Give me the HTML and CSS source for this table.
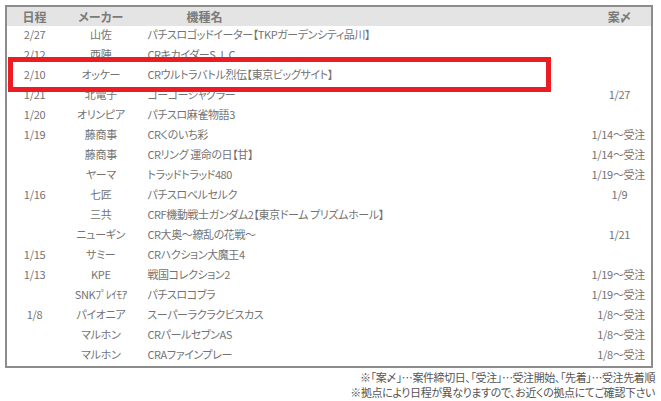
FILE: index.html
```html
<!DOCTYPE html>
<html lang="ja">
<head>
  <meta charset="UTF-8" />
  <title>発売日程</title>
  <link rel="stylesheet" href="styles.css">
</head>
<body>
  <div class="schedule">
    <table class="schedule-table">
      <colgroup>
        <col class="col-date" />
        <col class="col-maker" />
        <col class="col-model" />
        <col class="col-deadline" />
      </colgroup>
      <thead>
        <tr>
          <th>日程</th>
          <th>メーカー</th>
          <th class="th-model">機種名</th>
          <th>案〆</th>
        </tr>
      </thead>
      <tbody>
        <tr><td>2/27</td><td>山佐</td><td>パチスロゴッドイーター【TKPガーデンシティ品川】</td><td></td></tr>
        <tr><td>2/12</td><td>西陣</td><td>CRキカイダーS．I．C</td><td></td></tr>
        <tr><td>2/10</td><td>オッケー</td><td>CRウルトラバトル烈伝【東京ビッグサイト】</td><td></td></tr>
        <tr><td>1/21</td><td>北電子</td><td>ゴーゴージャグラー</td><td>1/27</td></tr>
        <tr><td>1/20</td><td>オリンピア</td><td>パチスロ麻雀物語3</td><td></td></tr>
        <tr><td>1/19</td><td>藤商事</td><td>CRくのいち彩</td><td class="right">1/14～受注</td></tr>
        <tr><td></td><td>藤商事</td><td>CRリング 運命の日【甘】</td><td class="right">1/14～受注</td></tr>
        <tr><td></td><td>ヤーマ</td><td>トラッドトラッド480</td><td class="right">1/19～受注</td></tr>
        <tr><td>1/16</td><td>七匠</td><td>パチスロベルセルク</td><td>1/9</td></tr>
        <tr><td></td><td>三共</td><td>CRF機動戦士ガンダム2【東京ドーム プリズムホール】</td><td></td></tr>
        <tr><td></td><td>ニューギン</td><td>CR大奥～繚乱の花戦～</td><td>1/21</td></tr>
        <tr><td>1/15</td><td>サミー</td><td>CRハクション大魔王4</td><td></td></tr>
        <tr><td>1/13</td><td>KPE</td><td>戦国コレクション2</td><td class="right">1/19～受注</td></tr>
        <tr><td></td><td>SNKﾌﾟﾚｲﾓｱ</td><td>パチスロコブラ</td><td class="right">1/19～受注</td></tr>
        <tr><td>1/8</td><td>パイオニア</td><td>スーパーラクラクビスカス</td><td class="right">1/8～受注</td></tr>
        <tr><td></td><td>マルホン</td><td>CRパールセブンAS</td><td class="right">1/8～受注</td></tr>
        <tr><td></td><td>マルホン</td><td>CRAファインプレー</td><td class="right">1/8～受注</td></tr>
      </tbody>
    </table>
    <div class="highlight"></div>
    <p class="note">※「案〆」…案件締切日、「受注」…受注開始、「先着」…受注先着順</p>
    <p class="note">※拠点により日程が異なりますので、お近くの拠点にてご確認下さい</p>
  </div>
</body>
</html>
```

FILE: styles.css
```css
* { box-sizing: border-box; margin: 0; padding: 0; }
body {
  font-family: "Noto Sans CJK JP", "Noto Sans", sans-serif;
  font-size: 11px;
  color: #737373;
  background: #fff;
  font-feature-settings: "palt";
}
.schedule {
  position: relative;
  width: 648px;
  margin: 5px 0 0 5px;
}
.schedule-table {
  width: 648px;
  border: 2px solid #8c8c8c;
  border-collapse: collapse;
  table-layout: fixed;
}
.col-date { width: 56px; }
.col-maker { width: 77px; }
.col-model { width: 447px; }
.col-deadline { width: 64px; }

.schedule-table th {
  background: #e4e4e4;
  color: #7a7a7a;
  font-weight: 700;
  font-size: 12px;
  height: 19px;
  line-height: 19px;
  text-align: center;
}
.schedule-table th.th-model {
  text-align: left;
  padding-left: 47px;
}
.schedule-table td {
  height: 20px;
  line-height: 16px;
  padding-bottom: 4px;
  text-align: center;
  white-space: nowrap;
  letter-spacing: -0.3px;
}
.schedule-table td:nth-child(3) {
  text-align: left;
  padding-left: 8px;
  letter-spacing: -0.4px;
}
.schedule-table td.right {
  text-align: right;
  padding-right: 6px;
}

/* 注目行の赤枠 */
.highlight {
  position: absolute;
  left: 3px;
  top: 52px;
  width: 543px;
  height: 35px;
  border: 5px solid #ec1c24;
}
.note {
  text-align: right;
  color: #555;
  line-height: 15px;
  letter-spacing: -0.4px;
  margin-right: -2px;
}
.note:first-of-type { margin-top: 2px; }
```
